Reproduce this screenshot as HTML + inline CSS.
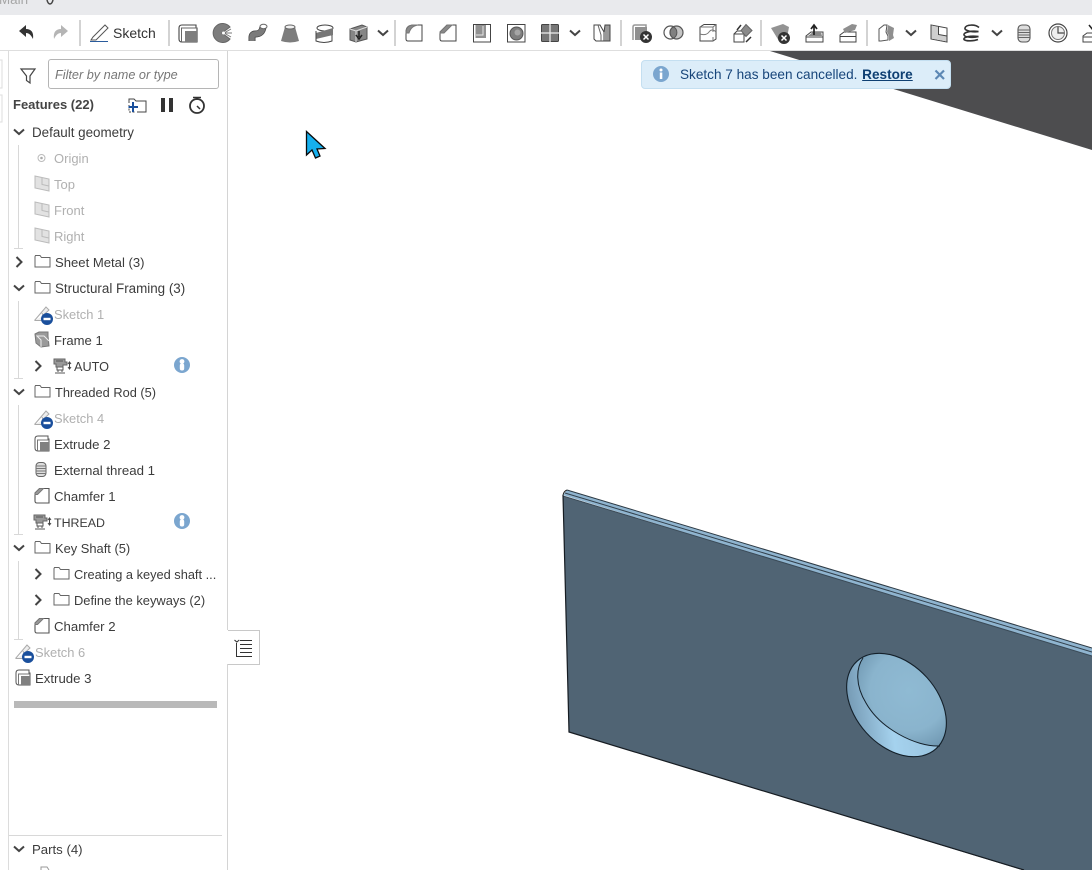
<!DOCTYPE html>
<html><head><meta charset="utf-8"><style>
html,body{margin:0;padding:0;width:1092px;height:870px;overflow:hidden;background:#fff}
body{position:relative;font-family:"Liberation Sans",sans-serif;color:#333}
svg#g{position:absolute;left:0;top:0}
.t{position:absolute;font-size:13px;line-height:16px;white-space:nowrap;color:#3c3c3c}
.d{color:#b0b0b0}
</style></head><body>
<svg id="g" width="1092" height="870" viewBox="0 0 1092 870" fill="none" xmlns="http://www.w3.org/2000/svg">
<defs>
<g id="folder"><path d="M1 3.500V14H16V4.500H7.500L6 2.500H1.500Z" stroke="#666" stroke-width="1" fill="#fff"/></g>
<g id="down"><path d="M-5 -2.500L0 2 5 -2.500" stroke="#444" stroke-width="2"/></g>
<g id="right"><path d="M-2.500 -5L2.500 0 -2.500 5" stroke="#444" stroke-width="2"/></g>
<g id="plane"><path d="M1 2L15 5V17L1 14Z" fill="#e2e2e2" stroke="#bbb"/><path d="M8 3.500V10.500L15 12" stroke="#bbb"/></g>
<g id="sk"><path d="M0.500 15.500L12 2 15 5 8 11.500M0.500 15.500H11L8 8" stroke="#aaa" stroke-width="1" fill="#eee"/><circle cx="13" cy="14" r="6" fill="#1a4f9c"/><rect x="9.500" y="12.800" width="7" height="2.400" fill="#fff"/></g>
<g id="ext"><path d="M1 4Q1 1 4 1H14V4H15V16H4Q1 16 1 13Z" fill="#fff" stroke="#555"/><path d="M3.500 16V5H15" stroke="#777"/><rect x="6" y="7" width="9" height="9" fill="#808080"/></g>
<g id="cham"><path d="M1 6L5.500 1.500H15V16H3Q1 16 1 14Z" fill="#fff" stroke="#555" stroke-width="1.100"/><path d="M1 6L5.500 1.500H9.500L3.500 7.500H1Z" fill="#999" stroke="#777"/></g>
<g id="fp"><path d="M1 3L5 1H14V5L15 15 7 16 2 12Z" fill="#9a9a9a" stroke="#777"/><path d="M7 16V9L3 5H10L15 10" stroke="#eee"/></g>
<g id="cyl"><rect x="3" y="1.500" width="10" height="14" rx="3.500" fill="#ddd" stroke="#666"/><path d="M3 5H13M3 7.500H13M3 10H13M3 12.500H13" stroke="#777"/></g>
<g id="fs"><path d="M1 2H12V5H14V8H10V10H3V7H1Z" fill="#999" stroke="#666"/><path d="M3 4H10M4 10V13H10V10M5 13V15M9 13V15M2 16H12" stroke="#555"/><path d="M16.500 5V12M15 7L16.500 5 18 7M15 10L16.500 12 18 10" stroke="#444"/></g>
<g id="info"><circle r="8" fill="#7ba6cf"/><circle cy="-3.500" r="2.400" fill="#fff"/><rect x="-2.200" y="-1.500" width="4.400" height="7" rx="2" fill="#fff"/></g>
<clipPath id="bc"><ellipse cx="896.500" cy="705" rx="41" ry="59" transform="rotate(-42 896.500 705)"/></clipPath>
<radialGradient id="b1" cx=".5" cy=".48" r=".58"><stop offset="0" stop-color="#8fbad3"/><stop offset=".65" stop-color="#8ab4cd"/><stop offset="1" stop-color="#729ab4"/></radialGradient>
<linearGradient id="b2" x1="0" y1="0" x2="1" y2="1"><stop offset="0" stop-color="#5f8099"/><stop offset=".45" stop-color="#a5d2ee"/><stop offset="1" stop-color="#8fb8d3"/></linearGradient>
</defs>

<!-- top strip -->
<rect width="1092" height="15" fill="#e9eaed"/>
<path d="M47 0Q48 4 50 4T53 0" stroke="#444" stroke-width="1.500"/>

<!-- 3D dark face -->
<polygon points="770,51 1092,51 1092,150" fill="#4d4d4f"/>

<!-- plate -->
<polygon points="563,495 567,490 1092,648 1092,658" fill="#8fb4cf"/>
<polygon points="563,496 1092,656 1092,870 1022,870 569,732" fill="#506474"/>
<path d="M567,490 1092,648" stroke="#2d3a44" stroke-width="1"/>
<path d="M565,493 1092,652" stroke="#33414d" stroke-width="1"/>
<path d="M563,496 1092,656" stroke="#3a4a57" stroke-width="1"/>
<path d="M563,495 569,732 1024,870" stroke="#161c22" stroke-width="1.200"/>
<path d="M563,495Q564,491 567,490" stroke="#222"/>

<!-- boss -->
<ellipse cx="896.500" cy="705" rx="41" ry="59" transform="rotate(-42 896.500 705)" fill="url(#b2)"/>
<g clip-path="url(#bc)"><path d="M863,658C856,668 855,685 866,703C880,728 915,747 940,746L960,746 960,640 863,640Z" fill="url(#b1)"/></g>
<path d="M863,658C856,668 855,685 866,703C880,728 915,747 940,746" stroke="#14202a" stroke-width="1"/>
<ellipse cx="896.500" cy="705" rx="41" ry="59" transform="rotate(-42 896.500 705)" stroke="#14202a" stroke-width="1.100"/>

<!-- toolbar -->
<rect y="15" width="1092" height="35" fill="#fff"/>
<rect y="50" width="1092" height="1" fill="#dedede"/>
<g fill="#d3d3d3"><rect x="79" y="20" width="2" height="26"/><rect x="168" y="20" width="2" height="26"/><rect x="394" y="20" width="2" height="26"/><rect x="620" y="20" width="2" height="26"/><rect x="760" y="20" width="2" height="26"/><rect x="866" y="20" width="2" height="26"/></g>

<!-- undo redo -->
<path d="M19 31L26 25V29C31 29 34 32 33 39C31 35 29 33 26 33V37Z" fill="#333"/>
<path d="M68 31L61 25V29C56 29 53 32 54 39C56 35 58 33 61 33V37Z" fill="#b5b5b5"/>
<!-- pencil -->
<path d="M93 37L105 25 108 28 96 40 91 40Z" stroke="#555" stroke-width="1"/><path d="M90 41.500H108" stroke="#2a5b9c" stroke-width="1"/>

<!-- extrude -->
<g transform="translate(179,24)"><path d="M0 4Q0 1 3 1H17V4H18V18H3Q0 18 0 15Z" fill="#fff" stroke="#444" stroke-width="1.100"/><path d="M2.500 18V4H18" stroke="#666"/><rect x="6" y="7" width="12" height="11" fill="#7e7e7e"/></g>
<!-- revolve -->
<path d="M230 27A9.500 9.500 0 1 0 230 39L222 33Z" fill="#7d7d7d" stroke="#666"/><path d="M224 33L231 29M224 33H232M224 33L231 37" stroke="#777"/><circle cx="223.500" cy="33" r="1.500" fill="#fff"/>
<!-- sweep -->
<path d="M252 41V37.500Q252 34 255.500 34Q262 34 263 27" stroke="#444" stroke-width="7"/>
<path d="M252 41V37.500Q252 34 255.500 34Q262 34 263 27" stroke="#7b7b7b" stroke-width="5.500"/>
<ellipse cx="263.500" cy="26.500" rx="3.500" ry="2.200" fill="#fff" stroke="#666"/>
<!-- loft -->
<path d="M285 27H295L299 41Q290 44 281 41Z" fill="#7d7d7d"/><ellipse cx="290" cy="27" rx="5" ry="2" fill="#f0f0f0" stroke="#666"/>
<!-- thicken -->
<ellipse cx="325" cy="28" rx="8" ry="3" fill="#fff" stroke="#444"/><path d="M316 33L333 28V35L316 39Z" fill="#777"/><path d="M316 31V41Q324 44 332 41V35" stroke="#444"/>
<!-- enclose -->
<path d="M350 29L362 25 367 27V39L356 42 350 40Z" fill="#868686" stroke="#555"/><path d="M356 31V42M350 29L356 31 367 27" stroke="#ddd"/><path d="M359 31V37M356 35L359 39 362 35" stroke="#222" stroke-width="1.500"/>
<use href="#down" x="383" y="33"/>

<!-- fillet -->
<g transform="translate(405,24)"><path d="M1 8Q1 1 9 1H17V17H3Q1 17 1 15Z" fill="#fff" stroke="#444"/><path d="M1 9Q1 1 9 1H13Q6 2 4 9Z" fill="#8a8a8a" stroke="#777"/></g>
<!-- chamfer -->
<g transform="translate(439,24)"><path d="M1 8L8 1H17V17H3Q1 17 1 15Z" fill="#fff" stroke="#444"/><path d="M1 8L8 1H13L5 9H1Z" fill="#8a8a8a" stroke="#777"/></g>
<!-- shell -->
<g transform="translate(473,24)"><rect x="0.500" y="0.500" width="17" height="17.500" fill="#fff" stroke="#444"/><path d="M2.500 1H13V14H2.500Z" fill="#919191"/><path d="M10 2V11H3" stroke="#e8e8e8"/></g>
<!-- hole -->
<g transform="translate(507,24)"><rect x="0.500" y="0.500" width="17.500" height="17.500" fill="#fff" stroke="#444"/><circle cx="9.500" cy="9.500" r="6.500" fill="#7e7e7e" stroke="#555"/><circle cx="10.500" cy="8.500" r="3" fill="#a5a5a5"/></g>
<!-- pattern -->
<g transform="translate(541,24)"><rect x="0.500" y="0.500" width="17" height="17" rx="1" fill="#777" stroke="#444"/><path d="M9 0V18M0 9H18" stroke="#eee" stroke-width="1.300"/></g>
<use href="#down" x="575" y="33"/>
<!-- draft -->
<g transform="translate(593,24)"><path d="M1 1H7L11 8V17H3L1 15Z" fill="#fff" stroke="#444"/><path d="M11 8L12 1H17V17H11" fill="#999" stroke="#444"/><path d="M5 1L8 11V17" stroke="#666"/></g>

<!-- delete -->
<g transform="translate(632,24)"><path d="M1 16V3Q1 1 3 1H14V3" stroke="#999" stroke-width="1.500"/><rect x="3" y="3" width="12" height="13" fill="#909090"/><circle cx="14" cy="13" r="6" fill="#333"/><path d="M11.500 10.500L16.500 15.500M16.500 10.500L11.500 15.500" stroke="#fff" stroke-width="1.500"/></g>
<!-- boolean -->
<circle cx="670.500" cy="32.500" r="6.500" fill="#fff" stroke="#555" stroke-width="1.200"/><circle cx="676.500" cy="32.500" r="6.500" fill="#c4c4c4" stroke="#555" stroke-width="1.200"/><path d="M673.500 26.800A6.500 6.500 0 0 1 673.500 38.200A6.500 6.500 0 0 1 673.500 26.800Z" fill="#808080" stroke="#555"/>
<!-- split -->
<g transform="translate(699,24)"><path d="M1 3L5 0.500H17V15L14 17H1Z" fill="#fff" stroke="#444"/><path d="M1 3H14L17 0.500M14 3V8M14 13V17M1 10Q7 12 10 8T17 8" stroke="#777"/></g>
<!-- transform -->
<g transform="translate(733,24)"><path d="M1 10H11V18H1ZM1 10L4 7H11V10" fill="#fff" stroke="#444"/><path d="M13 0.500L19 6.500 13 12.500 8 6.500Z" fill="#8a8a8a" stroke="#666"/><path d="M4 6L8 1M13 18L18 13" stroke="#333" stroke-width="1.500"/></g>

<!-- delete face -->
<g transform="translate(771,24)"><path d="M0 4L12 0 18 3 16 14 8 17Z" fill="#939393"/><circle cx="13" cy="14" r="6" fill="#333"/><path d="M10.500 11.500L15.500 16.500M15.500 11.500L10.500 16.500" stroke="#fff" stroke-width="1.500"/></g>
<!-- move face -->
<g transform="translate(805,24)"><path d="M1 12L6 8H18V18H1Z" fill="#fff" stroke="#444"/><path d="M1 13H18" stroke="#444"/><path d="M3 12L8 8H16L17 12Z" fill="#8a8a8a"/><path d="M9 11V2M6 5L9 1 12 5" stroke="#222" stroke-width="1.700"/></g>
<!-- replace face -->
<g transform="translate(839,24)"><path d="M1 11L5 8H17V18H1Z" fill="#fff" stroke="#444"/><path d="M1 12.500H17" stroke="#444"/><path d="M4 5L13 0 18 1 16 6 6 9Z" fill="#8f8f8f"/></g>

<!-- surface -->
<g transform="translate(878,24)"><path d="M1 5L6 1H9L8 8 10 12V16L3 17H1Z" fill="#fff" stroke="#555"/><path d="M10 1L16 4 15 11 16 14 11 17V12L9 8Z" fill="#8f8f8f"/></g>
<use href="#down" x="911" y="33"/>
<!-- plane -->
<g transform="translate(930,24)"><path d="M1 1L17 4V18L1 15Z" fill="#fff" stroke="#444"/><path d="M1.500 1.500L8.500 3V10.500L16.500 12V17.400L1.500 14.600Z" fill="#cfcfcf"/><path d="M8.500 2V10.500L17 12" stroke="#444"/></g>
<!-- helix -->
<g stroke="#333" stroke-width="1.600"><path d="M979 27.500C975 24 966 24.500 965 28C964 31 974 32.500 978.500 31.500"/><path d="M978.500 31.500C970 30.500 963.500 32.500 964 35C965 37.500 974 38 978.500 36.500"/><path d="M978.500 36.500C970 35.500 963 37 964 39.500C966 41.500 974 41 978 39.500"/></g>
<use href="#down" x="997" y="33"/>
<!-- thread cyl -->
<g transform="translate(1017,24)"><rect x="1" y="1" width="12" height="17" rx="4" fill="#ddd" stroke="#555" stroke-width="1.100"/><path d="M1 6H13M1 8.500H13M1 11H13M1 13.500H13" stroke="#666"/></g>
<!-- clock -->
<circle cx="1058" cy="33" r="9" stroke="#444" stroke-width="1.200"/><circle cx="1058" cy="33" r="6.500" fill="#eee" stroke="#777"/><path d="M1058 27V33H1064" stroke="#444" stroke-width="1.200"/>
<!-- last -->
<g transform="translate(1082,24)"><path d="M1 12L5 9H14V18H1Z" fill="#fff" stroke="#444"/><path d="M1 13H14" stroke="#444"/><path d="M7 1L11 6 15 1M11 6V0" stroke="#222" stroke-width="1.500"/></g>

<!-- left strip -->
<path d="M0 60H2V88H0M0 95H2V122H0" stroke="#ddd" stroke-width="1"/>
<!-- panel borders -->
<rect x="8" y="51" width="1" height="819" fill="#dcdcdc"/>
<rect x="227" y="51" width="1" height="579" fill="#d4d4d4"/>
<rect x="227" y="664" width="1" height="206" fill="#d4d4d4"/>
<path d="M228 630.500H259.500V664.500H228" stroke="#c8c8c8"/>
<!-- list icon -->
<path d="M234.500 640L236.800 642 239.300 640" stroke="#333" stroke-width="1.100"/><path d="M236.500 643V656.500M240 640.500H252M240 644.500H252M240 648.500H252M240 652.500H252M236 656.500H252" stroke="#333" stroke-width="1"/>

<!-- filter -->
<path d="M21 69H35L30 76V83L26.500 80.500V76Z" stroke="#444" stroke-width="1.200" fill="#fff"/>
<rect x="48.500" y="59.500" width="170" height="29" rx="2.500" stroke="#b5b5b5" fill="#fff"/>
<!-- features icons -->
<path d="M129 103V99H134L136 101H146V112H137" stroke="#444"/><path d="M129 105V112H136" stroke="#444" stroke-dasharray="2 1.500"/><path d="M133 102V112M128.500 107H138" stroke="#1a4f9c" stroke-width="2"/>
<rect x="161" y="98" width="4" height="14" fill="#333"/><rect x="169" y="98" width="4" height="14" fill="#333"/>
<circle cx="197" cy="106" r="7" stroke="#333" stroke-width="1.800"/><path d="M193 97.500H201M197 98V100M197 106L200 109" stroke="#333" stroke-width="1.500"/>

<!-- tree lines -->
<g stroke="#d8d8d8"><path d="M18.500 145V248M14 248.500H23M18.500 301V378M14 378.500H23M18.500 405V534M14 534.500H23M18.500 561V639M14 639.500H23"/></g>

<!-- tree chevrons -->
<use href="#down" x="19" y="132"/><use href="#right" x="19" y="262"/><use href="#down" x="19" y="288"/><use href="#right" x="38" y="366"/><use href="#down" x="19" y="392"/><use href="#down" x="19" y="548"/><use href="#right" x="38" y="574"/><use href="#right" x="38" y="600"/>

<!-- tree icons -->
<circle cx="41.500" cy="158" r="3.500" stroke="#bbb"/><circle cx="41.500" cy="158" r="1.300" fill="#aaa"/>
<use href="#plane" x="34" y="174"/><use href="#plane" x="34" y="200"/><use href="#plane" x="34" y="226"/>
<use href="#folder" x="34" y="253"/><use href="#folder" x="34" y="279"/>
<use href="#sk" x="34" y="305"/>
<use href="#fp" x="34" y="331"/>
<use href="#fs" x="53" y="357"/>
<use href="#info" x="182" y="365"/>
<use href="#folder" x="34" y="383"/>
<use href="#sk" x="34" y="409"/>
<use href="#ext" x="34" y="435"/>
<use href="#cyl" x="33" y="461"/>
<use href="#cham" x="34" y="487"/>
<use href="#fs" x="33" y="513"/>
<use href="#info" x="182" y="521"/>
<use href="#folder" x="34" y="539"/>
<use href="#folder" x="53" y="565"/><use href="#folder" x="53" y="591"/>
<use href="#cham" x="34" y="617"/>
<use href="#sk" x="15" y="643"/>
<use href="#ext" x="15" y="669"/>

<rect x="14" y="701" width="203" height="7" fill="#b9b9b9"/>
<rect x="9" y="835" width="213" height="1" fill="#d8d8d8"/>
<use href="#down" x="19" y="849"/>
<path d="M41 870V867H47L49 870" stroke="#999"/>

<!-- toast -->
<rect x="641.500" y="60.500" width="309" height="28" rx="3.500" fill="#dcedf9" stroke="#c4dff1"/>
<circle cx="661" cy="74" r="8" fill="#7ba6cf"/><circle cx="661" cy="70" r="1.500" fill="#fff"/><rect x="659.800" y="72.500" width="2.500" height="6.500" fill="#fff"/>
<path d="M935.500 70.500L944 79M944 70.500L935.500 79" stroke="#5d88b4" stroke-width="2.200"/>

<!-- cursor -->
<path d="M306.500 131.500V155L312 150 315.500 158 320 156 317 149 325 148.500Z" fill="#16b0ee" stroke="#0a0a0a" stroke-width="1.300"/>
</svg>

<div class="t" style="left:-1px;top:-8px;font-size:13.400px;color:#a6a6a6">Main</div>
<div class="t" style="left:113px;top:25px;font-size:14px;color:#333">Sketch</div>
<div class="t" style="left:680px;top:66px;font-size:14px;color:#17457a;transform:scaleX(.97);transform-origin:0 50%">Sketch 7 has been cancelled. <b style="text-decoration:underline;color:#0e3f72;margin-left:1px">Restore</b></div>
<div class="t" style="left:55px;top:67px;font-size:12.700px;font-style:italic;color:#777">Filter by name or type</div>
<div class="t" style="left:13px;top:97px;font-weight:bold;color:#444">Features (22)</div>

<div class="t" style="left:32px;top:125px;font-size:13.400px">Default geometry</div>
<div class="t d" style="left:54px;top:151px">Origin</div>
<div class="t d" style="left:54px;top:177px">Top</div>
<div class="t d" style="left:54px;top:203px">Front</div>
<div class="t d" style="left:54px;top:229px">Right</div>
<div class="t" style="left:55px;top:255px;font-size:13.100px">Sheet Metal (3)</div>
<div class="t" style="left:55px;top:281px;font-size:13.400px">Structural Framing (3)</div>
<div class="t d" style="left:54px;top:307px;font-size:12.900px">Sketch 1</div>
<div class="t" style="left:54px;top:333px;font-size:13.100px">Frame 1</div>
<div class="t" style="left:74px;top:359px;font-size:12.700px">AUTO</div>
<div class="t" style="left:55px;top:385px;font-size:12.800px">Threaded Rod (5)</div>
<div class="t d" style="left:54px;top:411px;font-size:12.900px">Sketch 4</div>
<div class="t" style="left:54px;top:437px;font-size:13.200px">Extrude 2</div>
<div class="t" style="left:54px;top:463px;font-size:13.270px">External thread 1</div>
<div class="t" style="left:54px;top:489px;font-size:13.200px">Chamfer 1</div>
<div class="t" style="left:54px;top:515px;font-size:12.400px">THREAD</div>
<div class="t" style="left:55px;top:541px;font-size:12.900px">Key Shaft (5)</div>
<div class="t" style="left:74px;top:567px;font-size:12.800px">Creating a keyed shaft ...</div>
<div class="t" style="left:74px;top:593px;font-size:12.900px">Define the keyways (2)</div>
<div class="t" style="left:54px;top:619px;font-size:13.200px">Chamfer 2</div>
<div class="t d" style="left:35px;top:645px;font-size:12.900px">Sketch 6</div>
<div class="t" style="left:35px;top:671px;font-size:13.200px">Extrude 3</div>
<div class="t" style="left:32px;top:842px;font-size:13.200px">Parts (4)</div>
</body></html>
